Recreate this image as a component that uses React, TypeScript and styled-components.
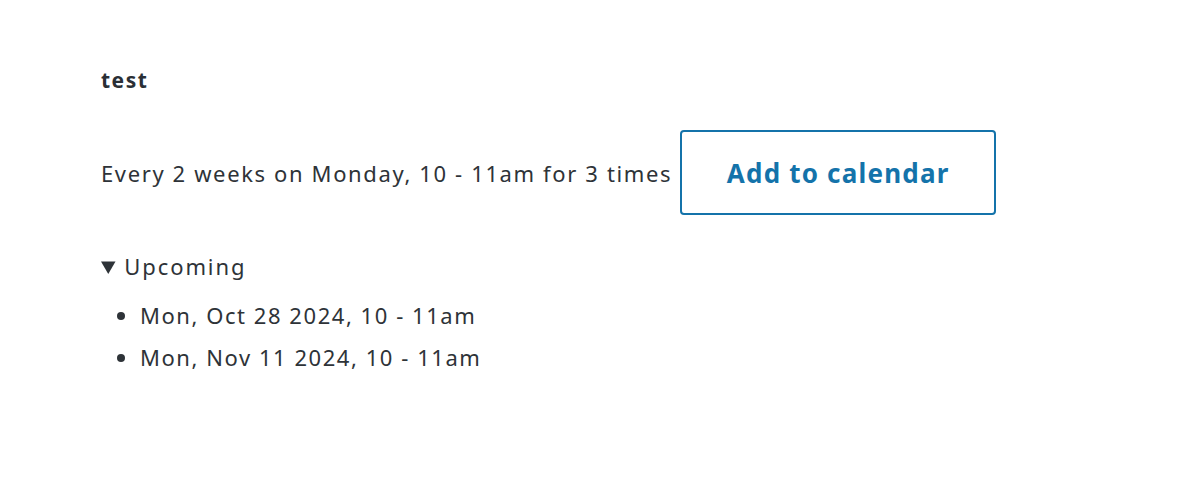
import React from 'react';
import styled, { createGlobalStyle } from 'styled-components';

const GlobalStyle = createGlobalStyle`
  body {
    margin: 0;
    background: #ffffff;
    font-family: "Noto Sans", "Open Sans", sans-serif;
    color: #2e3338;
  }
`;

const Page = styled.div`
  padding: 64px 101px;
`;

const Title = styled.h3`
  margin: 0 0 34px;
  font-size: 21px;
  font-weight: 700;
  line-height: 32px;
  letter-spacing: 1.5px;
  color: #2a2f35;
`;

const ScheduleRow = styled.div`
  display: flex;
  align-items: center;
  gap: 8px;
  margin-bottom: 35px;
`;

const ScheduleText = styled.span`
  font-size: 22px;
  line-height: 32px;
  letter-spacing: 1.63px;
`;

const CalendarButton = styled.button`
  width: 316px;
  height: 85px;
  background: #ffffff;
  border: 2px solid #1473aa;
  border-radius: 4px;
  color: #1473aa;
  font-family: inherit;
  font-size: 26px;
  font-weight: 700;
  letter-spacing: 1.2px;
  cursor: pointer;
`;

const Upcoming = styled.details`
  font-size: 22px;
  line-height: 32px;
  letter-spacing: 1.55px;
`;

const Summary = styled.summary`
  cursor: pointer;
  margin-bottom: 12px;
  letter-spacing: 1.9px;
`;

const DateList = styled.ul`
  margin: 0;
  padding-left: 39px;
`;

const DateItem = styled.li`
  line-height: 42px;
`;

const upcoming = ['Mon, Oct 28 2024, 10 - 11am', 'Mon, Nov 11 2024, 10 - 11am'];

const App: React.FC = () => (
  <>
    <GlobalStyle />
    <Page>
      <Title>test</Title>
      <ScheduleRow>
        <ScheduleText>Every 2 weeks on Monday, 10 - 11am for 3 times</ScheduleText>
        <CalendarButton>Add to calendar</CalendarButton>
      </ScheduleRow>
      <Upcoming open>
        <Summary>Upcoming</Summary>
        <DateList>
          {upcoming.map((d) => (
            <DateItem key={d}>{d}</DateItem>
          ))}
        </DateList>
      </Upcoming>
    </Page>
  </>
);

export default App;
